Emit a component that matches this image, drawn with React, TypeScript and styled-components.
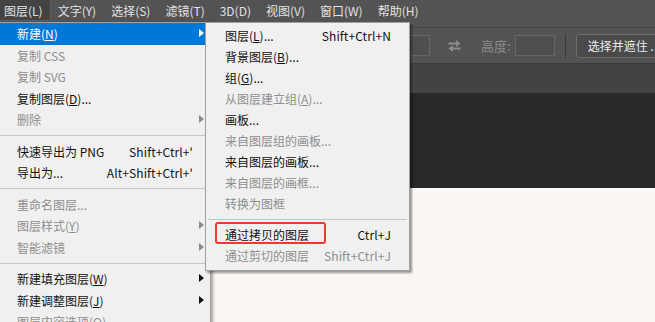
import styled, { createGlobalStyle } from 'styled-components';

const GlobalStyle = createGlobalStyle`
  html, body {
    margin: 0;
    padding: 0;
  }
  body {
    width: 655px;
    height: 322px;
    overflow: hidden;
    background: #fbf7f4;
    font-family: "Noto Sans CJK SC", "Microsoft YaHei", sans-serif;
  }
`;

const Screen = styled.div`
  position: relative;
  display: flex;
  flex-direction: column;
  width: 655px;
  height: 322px;
  overflow: hidden;
`;

const MenuBar = styled.div`
  display: flex;
  align-items: flex-start;
  height: 27px;
  background: #535353;
  border-bottom: 1px solid #474747;
  box-sizing: content-box;
`;

const MenuTitle = styled.div<{ $active?: boolean }>`
  display: flex;
  align-items: center;
  flex-shrink: 0;
  height: 21px;
  padding: 0 7px 0 4px;
  margin-right: 3px;
  box-sizing: border-box;
  font-size: 12px;
  color: #e2e2e2;
  white-space: nowrap;
  background: ${(p) => (p.$active ? '#434343' : 'transparent')};
  border: 1px solid ${(p) => (p.$active ? '#5e5e5e' : 'transparent')};
  border-top: none;
  border-left: none;
`;

const OptionsBar = styled.div`
  display: flex;
  align-items: center;
  height: 35px;
  padding-left: 380px;
  background: #535353;
  border-bottom: 1px solid #3c3c3c;
  box-sizing: content-box;

  & > * {
    flex-shrink: 0;
  }
`;

const Field = styled.div<{ $width: number; $gap?: number }>`
  width: ${(p) => p.$width}px;
  height: 21px;
  margin-left: ${(p) => p.$gap ?? 0}px;
  box-sizing: border-box;
  border: 1px solid #656565;
  background: #4f4f4f;
`;

const SwapIcon = styled.svg`
  margin-left: 17px;
  width: 15px;
  height: 14px;
`;

const FieldLabel = styled.span`
  margin-left: 19px;
  font-size: 13px;
  color: #8b8b8b;
  white-space: nowrap;
`;

const Divider = styled.div`
  width: 1px;
  height: 24px;
  margin-left: 10px;
  background: #3a3a3a;
`;

const OptionButton = styled.div`
  display: flex;
  align-items: center;
  height: 24px;
  margin-left: 10px;
  padding: 0 11px;
  box-sizing: border-box;
  border: 1px solid #6c6c6c;
  border-radius: 3px;
  background: #4a4a4a;
  font-size: 12px;
  color: #ececec;
  white-space: nowrap;
`;

const TabBar = styled.div`
  height: 29px;
  background: #434343;
`;

const Workspace = styled.div`
  height: 95px;
  background: #282828;
`;

const Canvas = styled.div`
  flex: 1;
  background: #fbf7f4;
`;

const Dropdown = styled.div`
  position: absolute;
  top: 22px;
  left: 0;
  width: 210px;
  height: 320px;
  background: #f0f0f0;
  border-top: 1px solid #a0a0a0;
  border-right: 1px solid #a0a0a0;
  box-shadow: 2px 2px 3px rgba(0, 0, 0, 0.35);
`;

const Submenu = styled.div`
  position: absolute;
  top: 22px;
  left: 205px;
  width: 203px;
  padding: 1.5px 0 3px;
  background: #f0f0f0;
  border: 1px solid #a0a0a0;
  box-shadow: 2px 2px 2px rgba(0, 0, 0, 0.4);
`;

const Row = styled.div<{ $height: number; $pad: string; $disabled?: boolean; $active?: boolean }>`
  position: relative;
  display: flex;
  align-items: center;
  height: ${(p) => p.$height}px;
  padding: ${(p) => p.$pad};
  font-size: 12px;
  white-space: nowrap;
  color: ${(p) => (p.$active ? '#ffffff' : p.$disabled ? '#8e8e8e' : '#111111')};
  background: ${(p) => (p.$active ? '#0078d7' : 'transparent')};
`;

const Label = styled.span`
  flex: 1;
`;

const Shortcut = styled.span`
  letter-spacing: 0.1px;
`;

const Arrow = styled.span<{ $color: string }>`
  position: absolute;
  right: 6px;
  top: 50%;
  margin-top: -4.5px;
  width: 0;
  height: 0;
  border-top: 4.5px solid transparent;
  border-bottom: 4.5px solid transparent;
  border-left: 5px solid ${(p) => p.$color};
`;

const Separator = styled.div<{ $inset: number }>`
  height: 10px;
  margin: 0 ${(p) => p.$inset}px;
  display: flex;
  align-items: center;

  &::after {
    content: '';
    flex: 1;
    height: 1px;
    background: #c6c6c6;
  }
`;

const Mnemonic = styled.u`
  text-decoration: underline;
  text-underline-offset: 1px;
`;

const Callout = styled.div`
  position: absolute;
  left: 9px;
  top: 199px;
  width: 111px;
  height: 22px;
  box-sizing: border-box;
  border: 2px solid #ec3a2f;
  border-radius: 3px;
`;

type Item =
  | { sep: true }
  | {
      sep?: false;
      text: string;
      key?: string;
      tail?: string;
      shortcut?: string;
      disabled?: boolean;
      active?: boolean;
      arrow?: boolean;
    };

const mainItems: Item[] = [
  { text: '新建(', key: 'N', tail: ')', active: true, arrow: true },
  { text: '复制 CSS', disabled: true },
  { text: '复制 SVG', disabled: true },
  { text: '复制图层(', key: 'D', tail: ')...' },
  { text: '删除', disabled: true, arrow: true },
  { sep: true },
  { text: '快速导出为 PNG', shortcut: "Shift+Ctrl+'" },
  { text: '导出为...', shortcut: "Alt+Shift+Ctrl+'" },
  { sep: true },
  { text: '重命名图层...', disabled: true },
  { text: '图层样式(', key: 'Y', tail: ')', disabled: true, arrow: true },
  { text: '智能滤镜', disabled: true, arrow: true },
  { sep: true },
  { text: '新建填充图层(', key: 'W', tail: ')', arrow: true },
  { text: '新建调整图层(', key: 'J', tail: ')', arrow: true },
  { text: '图层内容选项(', key: 'O', tail: ')', disabled: true },
];

const subItems: Item[] = [
  { text: '图层(', key: 'L', tail: ')...', shortcut: 'Shift+Ctrl+N' },
  { text: '背景图层(', key: 'B', tail: ')...' },
  { text: '组(', key: 'G', tail: ')...' },
  { text: '从图层建立组(', key: 'A', tail: ')...', disabled: true },
  { text: '画板...' },
  { text: '来自图层组的画板...', disabled: true },
  { text: '来自图层的画板...' },
  { text: '来自图层的画框...', disabled: true },
  { text: '转换为图框', disabled: true },
  { sep: true },
  { text: '通过拷贝的图层', shortcut: 'Ctrl+J' },
  { text: '通过剪切的图层', shortcut: 'Shift+Ctrl+J', disabled: true },
];

const titles = ['图层(L)', '文字(Y)', '选择(S)', '滤镜(T)', '3D(D)', '视图(V)', '窗口(W)', '帮助(H)'];

const renderItems = (items: Item[], height: number, pad: string, inset: number) =>
  items.map((item, i) => {
    if (item.sep) return <Separator key={i} $inset={inset} />;
    const arrowColor = item.active ? '#ffffff' : item.disabled ? '#8e8e8e' : '#111111';
    return (
      <Row key={i} $height={height} $pad={pad} $disabled={item.disabled} $active={item.active}>
        <Label>
          {item.text}
          {item.key && <Mnemonic>{item.key}</Mnemonic>}
          {item.tail}
        </Label>
        {item.shortcut && <Shortcut>{item.shortcut}</Shortcut>}
        {item.arrow && <Arrow $color={arrowColor} />}
      </Row>
    );
  });

export default function App() {
  return (
    <>
      <GlobalStyle />
      <Screen>
        <MenuBar>
          {titles.map((t, i) => (
            <MenuTitle key={t} $active={i === 0}>
              {t}
            </MenuTitle>
          ))}
        </MenuBar>
        <OptionsBar>
          <Field $width={50} />
          <SwapIcon viewBox="0 0 15 14">
            <path d="M1.5 4.5H10" stroke="#8b8b8b" strokeWidth="2" />
            <path d="M9 1L13.5 4.5L9 8Z" fill="#8b8b8b" />
            <path d="M5 9.5H13.5" stroke="#8b8b8b" strokeWidth="2" />
            <path d="M6 6L1.5 9.5L6 13Z" fill="#8b8b8b" />
          </SwapIcon>
          <FieldLabel>高度:</FieldLabel>
          <Field $width={40} $gap={4} />
          <Divider />
          <OptionButton>选择并遮住 ...</OptionButton>
        </OptionsBar>
        <TabBar />
        <Workspace />
        <Canvas />

        <Dropdown>{renderItems(mainItems, 21.5, '0 17px', 0)}</Dropdown>
        <Submenu>
          {renderItems(subItems, 21.1, '0 18px 0 19px', 2)}
          <Callout />
        </Submenu>
      </Screen>
    </>
  );
}
